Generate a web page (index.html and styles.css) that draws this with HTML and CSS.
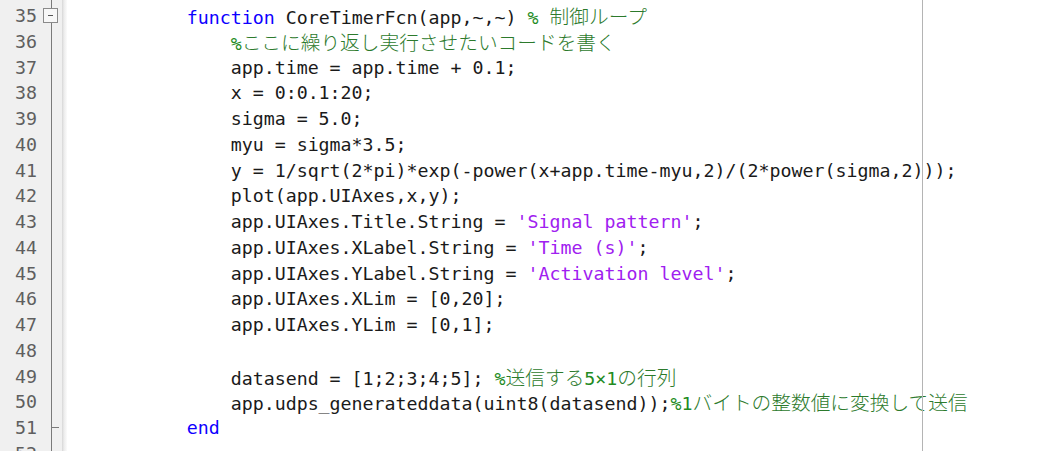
FILE: index.html
```html
<!DOCTYPE html>
<html lang="ja">
<head>
<meta charset="utf-8">
<title>Editor</title>
<link rel="stylesheet" href="styles.css">
</head>
<body>
<div class="editor">
  <div class="gutter">
    <div class="nums">
      <div class="row">35</div>
      <div class="row">36</div>
      <div class="row">37</div>
      <div class="row">38</div>
      <div class="row">39</div>
      <div class="row">40</div>
      <div class="row">41</div>
      <div class="row">42</div>
      <div class="row">43</div>
      <div class="row">44</div>
      <div class="row">45</div>
      <div class="row">46</div>
      <div class="row">47</div>
      <div class="row">48</div>
      <div class="row">49</div>
      <div class="row">50</div>
      <div class="row">51</div>
      <div class="row">52</div>
    </div>
    <div class="fold">
      <div class="row"><span class="fold-box"><span class="fold-minus"></span></span></div>
      <div class="row"></div>
      <div class="row"></div>
      <div class="row"></div>
      <div class="row"></div>
      <div class="row"></div>
      <div class="row"></div>
      <div class="row"></div>
      <div class="row"></div>
      <div class="row"></div>
      <div class="row"></div>
      <div class="row"></div>
      <div class="row"></div>
      <div class="row"></div>
      <div class="row"></div>
      <div class="row"></div>
      <div class="row"><span class="fold-end"></span></div>
      <div class="row"></div>
    </div>
  </div>
  <div class="sep"></div>
  <div class="code">
<div class="row">        <span class="kw">function</span> CoreTimerFcn(app,~,~) <span class="cm">% <span class="ja">制御ループ</span></span></div>
<div class="row">            <span class="cm">%<span class="ja">ここに繰り返し実行させたいコードを書く</span></span></div>
<div class="row">            app.time = app.time + 0.1;</div>
<div class="row">            x = 0:0.1:20;</div>
<div class="row">            sigma = 5.0;</div>
<div class="row">            myu = sigma*3.5;</div>
<div class="row">            y = 1/sqrt(2*pi)*exp(-power(x+app.time-myu,2)/(2*power(sigma,2)));</div>
<div class="row">            plot(app.UIAxes,x,y);</div>
<div class="row">            app.UIAxes.Title.String = <span class="str">'Signal pattern'</span>;</div>
<div class="row">            app.UIAxes.XLabel.String = <span class="str">'Time (s)'</span>;</div>
<div class="row">            app.UIAxes.YLabel.String = <span class="str">'Activation level'</span>;</div>
<div class="row">            app.UIAxes.XLim = [0,20];</div>
<div class="row">            app.UIAxes.YLim = [0,1];</div>
<div class="row"> </div>
<div class="row">            datasend = [1;2;3;4;5]; <span class="cm">%<span class="ja">送信する</span>5×1<span class="ja">の行列</span></span></div>
<div class="row">            app.udps_generateddata(uint8(datasend));<span class="cm">%1<span class="ja">バイトの整数値に変換して送信</span></span></div>
<div class="row">        <span class="kw">end</span></div>
<div class="row"> </div>
    <div class="margin-line"></div>
  </div>
</div>
</body>
</html>
```

FILE: styles.css
```css
html, body {
  margin: 0;
  padding: 0;
  background: #ffffff;
}

.editor {
  display: flex;
  width: 1060px;
  height: 451px;
  overflow: hidden;
  font-family: "DejaVu Sans Mono", "Liberation Mono", monospace;
  font-size: 18.27px;
  color: #1a1a1a;
}

.row {
  height: 25.75px;
  line-height: 25.75px;
  white-space: pre;
}

.gutter {
  display: flex;
  width: 62px;
  flex: none;
  background: #f0f0f0;
  padding-top: 3px;
}

.nums {
  width: 37px;
  text-align: right;
  color: #5f5f5f;
}

.fold {
  position: relative;
  width: 25px;
  margin-top: -3px;
  padding-top: 3px;
  background: linear-gradient(#7a7a7a, #7a7a7a) no-repeat 13.5px 0 / 1px 100%;
}

.fold .row {
  display: flex;
  align-items: center;
}

.fold-box {
  margin-left: 6px;
  width: 15px;
  height: 15px;
  border: 1px solid #8a8a8a;
  background: #f7f7f7;
  display: flex;
  align-items: center;
  justify-content: center;
  box-sizing: border-box;
}

.fold-minus {
  width: 5px;
  height: 1px;
  background: #555555;
}

.fold-end {
  margin-left: 14px;
  width: 8px;
  height: 1px;
  background: #7a7a7a;
}

.sep {
  width: 5px;
  flex: none;
  background: linear-gradient(to right, #d6d6d6, #ececec 40%, #fbfbfb);
}

.code {
  position: relative;
  flex: 1;
  padding-top: 3px;
  padding-left: 31.7px;
}

.kw { color: #0e00ff; }
.cm { color: #228b22; }
.str { color: #a020f0; }

.ja {
  font-family: "Noto Sans CJK JP", sans-serif;
  font-size: 19.7px;
  font-weight: 300;
  color: #2c7a2c;
}

.margin-line {
  position: absolute;
  top: 0;
  bottom: 0;
  left: 855px;
  width: 1px;
  background: #b4b4b4;
}
```
